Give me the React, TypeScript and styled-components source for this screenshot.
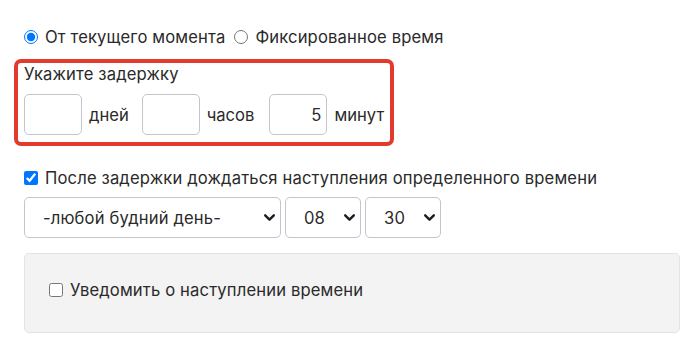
import React from "react";
import styled, { createGlobalStyle } from "styled-components";

const Global = createGlobalStyle`
  html, body { margin: 0; padding: 0; background: #fff; }
  body { font-family: Inter, "Noto Sans", sans-serif; color: #2e2e2e; font-size: 16px; }
  * { box-sizing: border-box; }
`;

const Text = `
  font-size: 16.6px;
  letter-spacing: 0.15px;
  font-weight: 400;
  color: #2a2a2a;
`;

const Page = styled.div`
  padding: 26px 20px 0 24px;
  display: flex;
  flex-direction: column;
`;

const RadioRow = styled.div`
  display: flex;
  align-items: center;
  height: 22px;
`;

const Choice = styled.label`
  display: inline-flex;
  align-items: center;
  gap: 7px;
  margin-right: 9px;
  line-height: 22px;
  ${Text}
  input { margin: 0; width: 14px; height: 14px; }
`;

const DelayBox = styled.div`
  margin: 11px 0 0 -10px;
  width: 380px;
  border: 4px solid #e23b2e;
  border-radius: 7px;
  padding: 0 6px 7px 6px;
`;

const Caption = styled.div`
  line-height: 24px;
  margin-top: -1px;
  ${Text}
`;

const InputsRow = styled.div`
  display: flex;
  align-items: center;
  margin-top: 8px;
`;

const NumInput = styled.input`
  width: 58px;
  height: 41px;
  border: 1px solid #c4c4cc;
  border-radius: 5px;
  font-family: inherit;
  ${Text}
  text-align: right;
  padding: 0 5px;
  outline: none;
`;

const Unit = styled.span<{ $gap?: number }>`
  margin: 0 ${(p) => p.$gap ?? 13}px 0 7px;
  ${Text}
  letter-spacing: 0;
`;

const CheckRow = styled.label`
  display: flex;
  align-items: center;
  gap: 7px;
  margin-top: 21px;
  height: 22px;
  ${Text}
  input { margin: 0; width: 14px; height: 14px; }
`;

const SelectRow = styled.div`
  display: flex;
  gap: 4px;
  margin-top: 8px;
`;

const SelectWrap = styled.div<{ $w: number }>`
  position: relative;
  width: ${(p) => p.$w}px;
  height: 41px;
`;

const Select = styled.select`
  appearance: none;
  -webkit-appearance: none;
  width: 100%;
  height: 100%;
  border: 1px solid #c4c4cc;
  border-radius: 5px;
  background: #fff;
  font-family: inherit;
  ${Text}
  padding: 0 30px 0 18px;
  outline: none;
`;

const Chevron = styled.svg`
  position: absolute;
  right: 5px;
  top: 14px;
  width: 13px;
  height: 13px;
  pointer-events: none;
`;

const GreyPanel = styled.div`
  margin-top: 15px;
  width: 656px;
  height: 80px;
  background: #f3f3f3;
  border: 1px solid #e3e3e3;
  border-radius: 5px;
  display: flex;
  align-items: center;
  padding: 0 0 6px 24px;
`;

const PanelCheck = styled.label`
  display: flex;
  align-items: center;
  gap: 7px;
  ${Text}
  input { margin: 0; width: 14px; height: 14px; }
`;

const Arrow = () => (
  <Chevron viewBox="0 0 12 12">
    <path d="M2 4 L6 8 L10 4" fill="none" stroke="#1e1e1e" strokeWidth="2.2" strokeLinecap="round" strokeLinejoin="round" />
  </Chevron>
);

export default function App() {
  return (
    <>
      <Global />
      <Page>
        <RadioRow>
          <Choice>
            <input type="radio" name="mode" defaultChecked />
            От текущего момента
          </Choice>
          <Choice>
            <input type="radio" name="mode" />
            Фиксированное время
          </Choice>
        </RadioRow>
        <DelayBox>
          <Caption>Укажите задержку</Caption>
          <InputsRow>
            <NumInput defaultValue="" />
            <Unit>дней</Unit>
            <NumInput defaultValue="" />
            <Unit $gap={15}>часов</Unit>
            <NumInput defaultValue="5" />
            <Unit $gap={0}>минут</Unit>
          </InputsRow>
        </DelayBox>
        <CheckRow>
          <input type="checkbox" defaultChecked />
          После задержки дождаться наступления определенного времени
        </CheckRow>
        <SelectRow>
          <SelectWrap $w={257}>
            <Select defaultValue="any">
              <option value="any">-любой будний день-</option>
            </Select>
            <Arrow />
          </SelectWrap>
          <SelectWrap $w={76}>
            <Select defaultValue="08">
              <option value="08">08</option>
            </Select>
            <Arrow />
          </SelectWrap>
          <SelectWrap $w={76}>
            <Select defaultValue="30">
              <option value="30">30</option>
            </Select>
            <Arrow />
          </SelectWrap>
        </SelectRow>
        <GreyPanel>
          <PanelCheck>
            <input type="checkbox" />
            Уведомить о наступлении времени
          </PanelCheck>
        </GreyPanel>
      </Page>
    </>
  );
}
